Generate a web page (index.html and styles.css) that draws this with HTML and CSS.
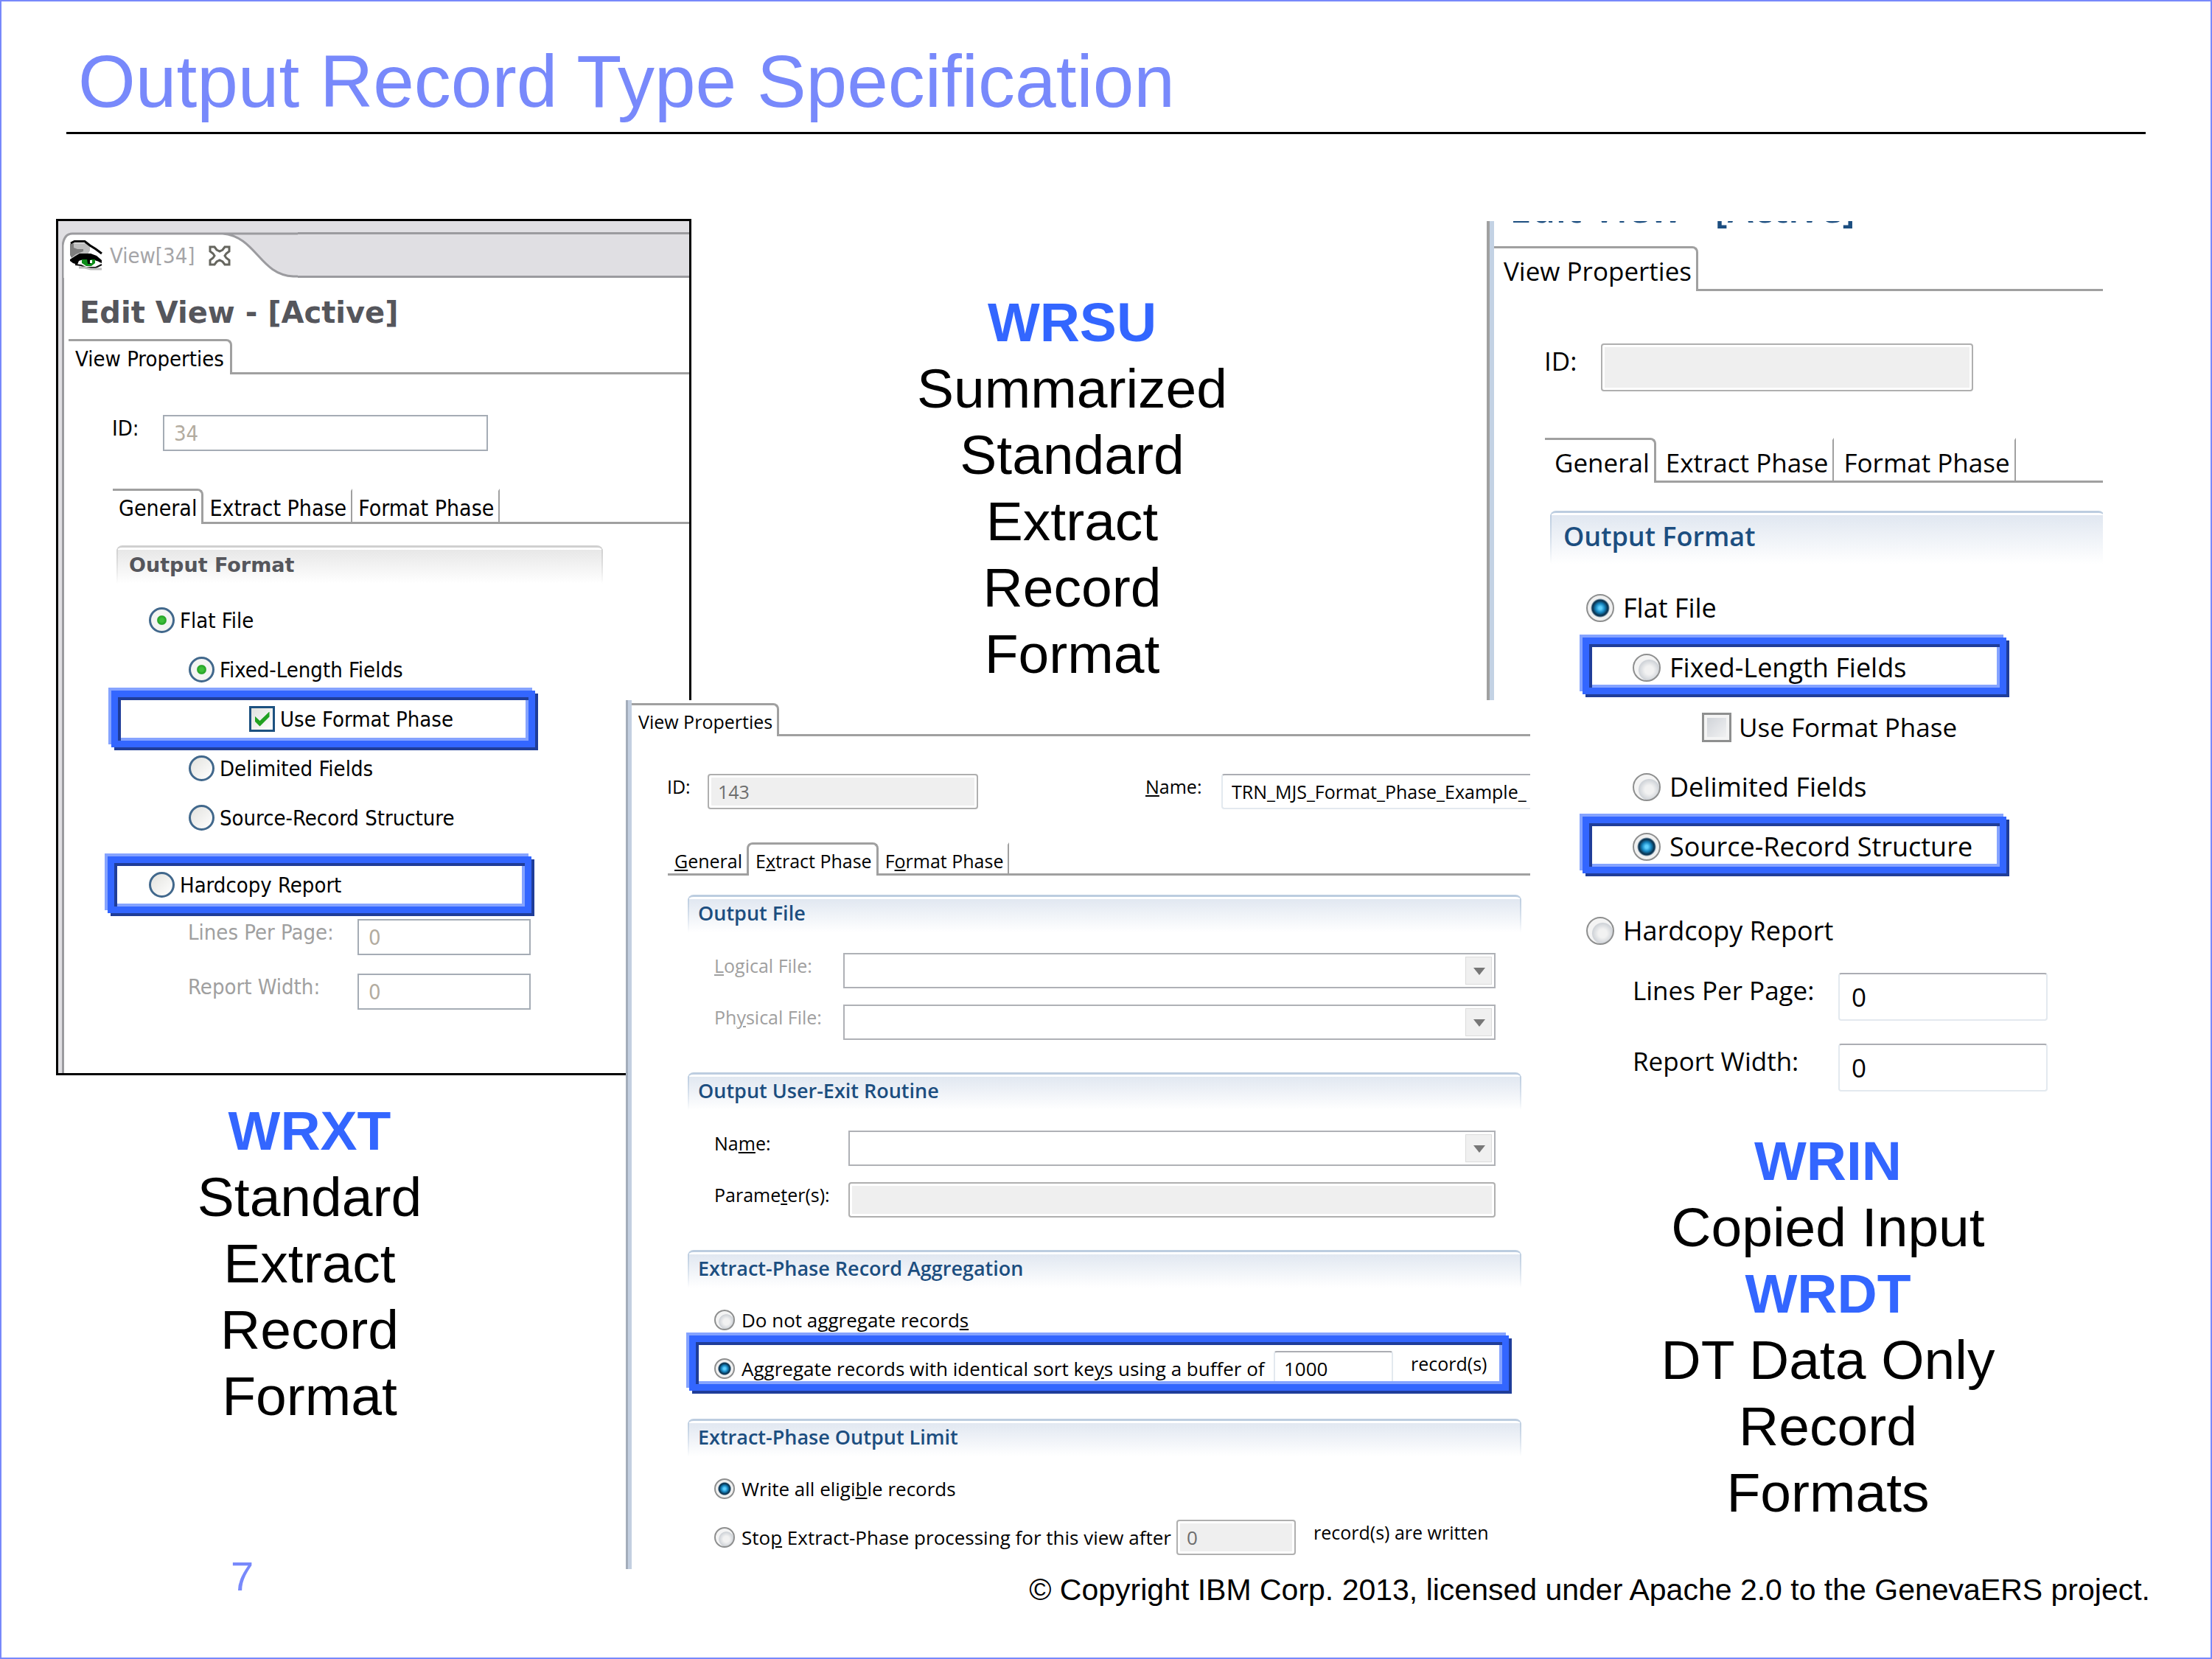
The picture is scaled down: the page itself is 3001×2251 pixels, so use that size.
FILE: index.html
```html
<!DOCTYPE html>
<html lang="en">
<head>
<meta charset="utf-8">
<title>Output Record Type Specification</title>
<link rel="stylesheet" href="styles.css">
</head>
<body>
<main class="slide">
  <header class="slide-header"><h1>Output Record Type Specification</h1></header>

  <div class="slide-body">
    <section class="stack stack--left">
      <div class="window window--xp">
        <div class="frame">
          <div class="editor-bar">
            <div class="editor-tab">
              <svg class="editor-tab-shape" viewBox="0 0 320 62" width="320" height="62" aria-hidden="true">
                <path d="M1 62V18Q3 2 14 2H218C264 6 268 58 314 60H320V62Z" fill="#fff"/>
                <path d="M1 62V18Q3 2 14 2H320M218 2C264 6 268 58 314 60H320" fill="none" stroke="#9b9b9f" stroke-width="3"/>
              </svg>
              <svg class="eye" viewBox="0 0 44 42" width="44" height="42" aria-hidden="true">
                <path d="M0 4H22L27 8V14L24 19H12L2 23Z" fill="#bdbdbd"/>
                <path d="M0 5H5V10L10 12H18V15L8 19L2 24L0 20Z" fill="#7d7d7d"/>
                <path d="M1 4L6 1.500H20L27 7L35 12L43 18" fill="none" stroke="#000" stroke-width="3"/>
                <path d="M0 26L6 22L13 18H28L36 21L43 27V31L38 29L30 26L18 26L12 28L10 33L4 31L0 28Z" fill="#000"/>
                <path d="M12 29L18 26H30L39 29L42 34L34 37H20L12 33Z" fill="#fff"/>
                <path d="M16 26H34V31L29 35H22L16 31Z" fill="#0c8c18"/>
                <path d="M23 25H28V32H24Z" fill="#000"/>
                <path d="M27 27H30V31H27Z" fill="#fff"/>
                <path d="M7 33L15 34L21 37H35L43 33" fill="none" stroke="#0f0f0f" stroke-width="2"/>
                <path d="M12 37H20L28 39H43" fill="none" stroke="#bcbcbc" stroke-width="3"/>
              </svg>
              <span class="editor-name">View[34]</span>
              <button class="close" type="button" aria-label="Close">
                <svg viewBox="0 0 30 28" width="30" height="28" aria-hidden="true"><path d="M2 2H8L11 6L15 8L19 6L22 2H28V8L24 11L22 14L24 17L28 20V26H22L19 22L15 20L11 22L8 26H2V20L6 17L8 14L6 11L2 8Z" fill="#fff" stroke="#66665f" stroke-width="3"/></svg>
              </button>
            </div>
            <div class="editor-rest"></div>
          </div>
          <div class="frame-body">
            <h2 class="view-title">Edit View - [Active]</h2>
            <div class="tabs tabs--page"><button type="button" class="tab is-active">View Properties</button><span class="tab-rest"></span></div>
            <div class="row row--id"><label for="a-id">ID:</label><input id="a-id" type="text" value="34" disabled></div>
            <div class="tabs tabs--sub"><button type="button" class="tab is-active">General</button><button type="button" class="tab">Extract Phase</button><button type="button" class="tab">Format Phase</button><span class="tab-rest"></span></div>
            <h3 class="section">Output Format</h3>
            <div class="options">
              <div class="option"><input id="a-flat" type="radio" name="a-kind" checked><label for="a-flat">Flat File</label></div>
              <div class="option option--sub"><input id="a-fixed" type="radio" name="a-flat" checked><label for="a-fixed">Fixed-Length Fields</label></div>
              <div class="option option--deep mark"><input id="a-use" type="checkbox" checked><label for="a-use">Use Format Phase</label></div>
              <div class="option option--sub"><input id="a-delim" type="radio" name="a-flat"><label for="a-delim">Delimited Fields</label></div>
              <div class="option option--sub"><input id="a-source" type="radio" name="a-flat"><label for="a-source">Source-Record Structure</label></div>
              <div class="option option--last mark mark--outer"><input id="a-hard" type="radio" name="a-kind"><label for="a-hard">Hardcopy Report</label></div>
            </div>
            <div class="fields">
              <div class="row is-disabled"><label for="a-lines">Lines Per Page:</label><input id="a-lines" type="text" value="0" disabled></div>
              <div class="row is-disabled"><label for="a-width">Report Width:</label><input id="a-width" type="text" value="0" disabled></div>
            </div>
          </div>
        </div>
      </div>
      <p class="caption"><strong>WRXT</strong><br>Standard<br>Extract<br>Record<br>Format</p>
    </section>

    <section class="stack stack--middle">
      <p class="caption"><strong>WRSU</strong><br>Summarized<br>Standard<br>Extract<br>Record<br>Format</p>
      <div class="window window--mid">
        <div class="tabs tabs--page"><button type="button" class="tab is-active">View Properties</button><span class="tab-rest"></span></div>
        <div class="row row--id">
          <label for="b-id">ID:</label><input id="b-id" type="text" value="143" disabled>
          <label class="name-label" for="b-name"><u>N</u>ame:</label><input id="b-name" type="text" value="TRN_MJS_Format_Phase_Example_">
        </div>
        <div class="tabs tabs--sub"><button type="button" class="tab before-active"><u>G</u>eneral</button><button type="button" class="tab is-active both">E<u>x</u>tract Phase</button><button type="button" class="tab">F<u>o</u>rmat Phase</button><span class="tab-rest"></span></div>
        <h3 class="section">Output File</h3>
        <div class="fields">
          <div class="row is-disabled"><label for="b-log"><u>L</u>ogical File:</label><div class="combo"><select id="b-log" disabled><option></option></select></div></div>
          <div class="row is-disabled"><label for="b-phy">Ph<u>y</u>sical File:</label><div class="combo"><select id="b-phy" disabled><option></option></select></div></div>
        </div>
        <h3 class="section">Output User-Exit Routine</h3>
        <div class="fields fields--exit">
          <div class="row"><label for="b-exit">Na<u>m</u>e:</label><div class="combo"><select id="b-exit"><option></option></select></div></div>
          <div class="row"><label for="b-par">Parame<u>t</u>er(s):</label><input id="b-par" type="text" disabled></div>
        </div>
        <h3 class="section">Extract-Phase Record Aggregation</h3>
        <div class="options">
          <div class="option"><input id="b-no" type="radio" name="b-agg"><label for="b-no">Do not aggregate record<u>s</u></label></div>
          <div class="option mark"><input id="b-agg" type="radio" name="b-agg" checked><label class="agg-label" for="b-agg">Aggregate records with identical sort ke<u>y</u>s using a buffer of</label><input class="count" type="text" value="1000" aria-label="Buffer size"><span class="unit">record(s)</span></div>
        </div>
        <h3 class="section">Extract-Phase Output Limit</h3>
        <div class="options">
          <div class="option"><input id="b-all" type="radio" name="b-lim" checked><label for="b-all">Write all eligi<u>b</u>le records</label></div>
          <div class="option"><input id="b-stop" type="radio" name="b-lim"><label class="stop-label" for="b-stop">Sto<u>p</u> Extract-Phase processing for this view after</label><input class="count" type="text" value="0" aria-label="Record limit" disabled><span class="unit">record(s) are written</span></div>
        </div>
      </div>
    </section>

    <section class="stack stack--right">
      <div class="window window--wide">
        <h2 class="view-title"><span>Edit View - [Active]</span></h2>
        <div class="tabs tabs--page"><button type="button" class="tab is-active">View Properties</button><span class="tab-rest"></span></div>
        <div class="row row--id"><label for="c-id">ID:</label><input id="c-id" type="text" disabled></div>
        <div class="tabs tabs--sub"><button type="button" class="tab is-active">General</button><button type="button" class="tab">Extract Phase</button><button type="button" class="tab">Format Phase</button><span class="tab-rest"></span></div>
        <h3 class="section">Output Format</h3>
        <div class="options">
          <div class="option"><input id="c-flat" type="radio" name="c-kind" checked><label for="c-flat">Flat File</label></div>
          <div class="option option--sub mark"><input id="c-fixed" type="radio" name="c-flat"><label for="c-fixed">Fixed-Length Fields</label></div>
          <div class="option option--deep"><input id="c-use" type="checkbox"><label for="c-use">Use Format Phase</label></div>
          <div class="option option--sub"><input id="c-delim" type="radio" name="c-flat"><label for="c-delim">Delimited Fields</label></div>
          <div class="option option--sub mark"><input id="c-source" type="radio" name="c-flat" checked><label for="c-source">Source-Record Structure</label></div>
          <div class="option option--last"><input id="c-hard" type="radio" name="c-kind"><label for="c-hard">Hardcopy Report</label></div>
        </div>
        <div class="fields">
          <div class="row"><label for="c-lines">Lines Per Page:</label><input id="c-lines" type="text" value="0"></div>
          <div class="row"><label for="c-width">Report Width:</label><input id="c-width" type="text" value="0"></div>
        </div>
      </div>
      <p class="caption"><strong>WRIN</strong><br>Copied Input<br><strong>WRDT</strong><br>DT Data Only<br>Record<br>Formats</p>
    </section>
  </div>

  <footer class="slide-footer"><span class="page">7</span><span class="copyright">© Copyright IBM Corp. 2013, licensed under Apache 2.0 to the GenevaERS project.</span></footer>
</main>
</body>
</html>
```
FILE: styles.css
```css
*, *::before, *::after { box-sizing: border-box; }
body { margin: 0; background: #fff; }
h1, h2, h3, p { margin: 0; font-weight: normal; }
button, input, select { font: inherit; color: inherit; margin: 0; }
button { background: none; border: 0; padding: 0; }

/* Slide */
.slide {
  min-height: 100vh;
  border: 2px solid #7889fb;
  display: flex;
  flex-direction: column;
  font-family: "Liberation Sans", Arial, sans-serif;
  color: #000;
}
.slide-header {
  margin: 48px 88px 0;
  padding: 0 16px 9px;
  border-bottom: 3px solid #000;
}
.slide-header h1 { font-size: 100px; line-height: 120px; color: #7889fb; }
.slide-body {
  display: grid;
  grid-template-columns: 773fr 89fr 1079fr 59fr 777fr;
  padding: 0 146px 0 74px;
  margin-top: 115px;
}
.stack { display: flex; flex-direction: column; grid-row: 1; min-width: 0; }
.stack--left { grid-column: 1 / 3; }
.stack--middle { grid-column: 2 / 5; z-index: 1; pointer-events: none; }
.stack--right { grid-column: 4 / 6; padding-top: 3px; }
.caption { font-size: 75px; line-height: 90px; text-align: center; }
.caption strong { color: #36f; }
.stack--left .caption { margin: 30px 174px 0 0; }
.stack--middle .caption { margin: 95px 16px 18px 0; }
.stack--right .caption { margin: 40px 0 0 90px; }
.slide-footer {
  display: flex;
  justify-content: space-between;
  align-items: flex-end;
  margin-top: -12px;
  padding: 0 82px 0 311px;
}
.page { font-size: 56px; line-height: 44px; padding-bottom: 20px; color: #7889fb; }
.copyright { font-size: 41px; line-height: 48px; }

/* Windows: shared parts */
.window {
  --line: #a0a0a0;
  background: #fff;
  font-size: var(--size);
  line-height: var(--lead);
  pointer-events: auto;
  overflow: hidden;
}
.tabs { display: flex; }
.tab {
  flex: none;
  padding: var(--tab-top) var(--tab-right) 0 var(--tab-left);
  border: solid var(--line);
  border-width: 0 2px 3px 0;
  border-top: 3px solid transparent;
  white-space: nowrap;
  line-height: var(--lead);
}
.tab.is-active {
  border-width: 3px 3px 0 0;
  border-color: var(--line);
  border-top-right-radius: 8px;
  padding-bottom: 3px;
}
.tab.both { border-left-width: 3px; border-top-left-radius: 8px; }
.tab.before-active { border-right-width: 0; }
.tab-rest { flex: 1; border-bottom: 3px solid var(--line); }
.section {
  padding: var(--sec-top) 0 var(--sec-bottom) var(--sec-left);
  border-top: 3px solid var(--sec-line);
  border-radius: 8px 8px 0 0;
  background:
    linear-gradient(var(--sec-line), transparent) left / 2px 100% no-repeat,
    linear-gradient(var(--sec-line), transparent) right / 2px 100% no-repeat,
    linear-gradient(#fff, #fff) top / 100% 3px no-repeat,
    linear-gradient(var(--sec-fill), #fff);
  color: var(--sec-ink);
}
.row { display: flex; align-items: flex-start; }
.row label { flex: none; white-space: nowrap; }
input[type="text"] {
  height: var(--box);
  min-width: 0;
  padding: 0 var(--box-pad);
  border: 2px solid #e3e9ef;
  border-top-color: #abadb3;
  border-radius: 4px;
  background: #fff;
}
input[type="text"]:disabled {
  border: 2px solid #afafaf;
  background: #efefef;
  box-shadow: inset 0 0 0 3px #fff;
  color: #6d6d6d;
}
.is-disabled label { color: #a0a0a0; }
.options { font-size: var(--option-size); }
.option { position: relative; display: flex; align-items: center; height: var(--pitch); padding-left: var(--indent); }
.option > label { flex: none; white-space: nowrap; padding-left: var(--gap); }
input[type="radio"], input[type="checkbox"] { appearance: none; flex: none; width: var(--dot); height: var(--dot); }
input[type="radio"] {
  border-radius: 50%;
  border: 2px solid #8e8f8f;
  background: radial-gradient(circle at 60% 60%, #f2f2f2 0 20%, #cfd3d8 48%, #f4f4f4 52% 100%);
}
input[type="radio"]:checked {
  background: radial-gradient(circle, #5fd0ff 0 8%, #1583bd 26%, #0b3350 42%, #14405f 46%, #f0f0f0 54% 100%);
}

/* Annotation frame drawn over a row */
.mark::after {
  content: "";
  position: absolute;
  top: var(--mark-top);
  left: var(--mark-left);
  width: 575px;
  height: 77px;
  border: 9px solid #36f;
  box-shadow: -4px -4px 0 #85a3ff, 4px 4px 0 #1f3d99, inset 4px 4px 0 #1f3d99, inset -4px -4px 0 #85a3ff;
  pointer-events: none;
}

/* Left window */
.window--xp {
  --size: 29px; --lead: 36px; --option-size: 29px;
  --tab-top: 6px; --tab-left: 9px; --tab-right: 8px;
  --sec-top: 6px; --sec-bottom: 7px; --sec-left: 17px;
  --sec-line: #d0d0d0; --sec-fill: #e6e6e6; --sec-ink: #55565c;
  --box: 49px; --box-pad: 13px;
  --pitch: 67px; --indent: 115px; --dot: 35px; --gap: 7px;
  --mark-top: -5px; --mark-left: 64px;
  border: 3px solid #000;
  font-family: "DejaVu Sans Condensed", "DejaVu Sans", sans-serif;
}
.frame { padding-left: 5px; background: #e0dfe3; }
.editor-bar { display: flex; height: 77px; padding-top: 15px; }
.editor-tab { position: relative; display: flex; align-items: center; width: 320px; padding: 2px 0 0 11px; }
.editor-tab-shape { position: absolute; left: 0; top: 0; }
.eye, .editor-name, .close { position: relative; }
.editor-name { padding-left: 10px; width: 144px; font-size: 29px; color: #a5a5a8; }
.close { line-height: 0; }
.editor-rest { flex: 1; border-top: 3px solid #9b9b9f; border-bottom: 3px solid #9b9b9f; }
.frame-body { border-left: 3px solid #9b9b9f; background: #fff; padding: 23px 0 86px; }
.window--xp .view-title { padding-left: 21px; font: bold 40px/48px "DejaVu Sans", sans-serif; color: #55565c; }
.window--xp .tabs--page { margin: 12px 0 0 6px; }
.window--xp .row--id { margin: 55px 0 0 65px; }
.window--xp .row--id label { width: 69px; }
.window--xp .row--id input { width: 441px; }
.window--xp .tabs--sub { --tab-left: 8px; --tab-right: 6px; margin: 51px 0 0 66px; font-size: 30px; }
.window--xp .section { width: 660px; margin: 29px 0 16px 71px; font: bold 27px/36px "DejaVu Sans", sans-serif; }
.window--xp .option--sub { --indent: 169px; }
.window--xp .option--deep { --indent: 251px; }
.window--xp .option--last { margin-top: 24px; }
.window--xp .mark--outer { --mark-left: 59px; }
.window--xp .fields { display: grid; gap: 25px; margin: 13px 0 0 168px; }
.window--xp .fields label { width: 230px; }
.window--xp .fields input { width: 235px; }
.window--xp input[type="text"]:disabled { border: 2px solid #a5acb5; border-radius: 0; background: #fff; color: #b3aca0; }
.window--xp input[type="radio"] { border: 3px solid #41688c; background: linear-gradient(135deg, #e2e2de, #fff); }
.window--xp input[type="radio"]:checked { background: radial-gradient(circle, #3fbf3a 0 12%, #21a121 28%, #f4f4f2 34% 100%); }
.window--xp input[type="checkbox"] {
  border: 3px solid #1c5180;
  background: linear-gradient(135deg, #e2e2de, #fff);
  display: grid;
  place-items: center;
}
.window--xp input[type="checkbox"]:checked::before {
  content: "";
  width: 20px;
  height: 20px;
  background: #21a121;
  clip-path: polygon(0 30%, 0 65%, 35% 100%, 100% 35%, 100% 0, 35% 62%);
}

/* Middle window */
.window--mid {
  --size: 25px; --lead: 34px; --option-size: 26px;
  --tab-top: 5px; --tab-left: 9px; --tab-right: 6px;
  --sec-top: 5px; --sec-bottom: 9px; --sec-left: 14px;
  --sec-line: #bccde0; --sec-fill: #dfe6f0; --sec-ink: #1c4e80;
  --box: 48px; --box-pad: 12px;
  --pitch: 66px; --indent: 117px; --dot: 28px; --gap: 9px;
  --mark-top: -12px; --mark-left: 83px;
  padding: 4px 0 10px;
  border-left: 3px solid #a3adbb;
  box-shadow: inset 5px 0 0 #c3cfe0;
  font-family: "Open Sans", "Noto Sans", sans-serif;
}
.window--mid .tabs--page { margin-left: 5px; }
.window--mid .row--id { margin: 51px 0 0 53px; }
.window--mid .row--id label { width: 55px; }
.window--mid .row--id input { width: 367px; }
.window--mid .row--id .name-label { width: 103px; margin-left: 227px; }
.window--mid .row--id input:last-child { flex: 1; border-right: 0; border-radius: 4px 0 0 4px; padding-right: 0; }
.window--mid .tabs--sub { margin: 45px 0 0 54px; }
.window--mid .section { margin: 26px 12px 0 81px; font-size: 27px; font-weight: 600; }
.window--mid .fields { display: grid; gap: 22px; margin: 28px 47px 44px 117px; }
.window--mid .fields label { width: 175px; }
.window--mid .fields--exit label { width: 182px; }
.window--mid .fields input, .combo { flex: 1; }
.window--mid .fields + .section { margin-top: 0; }
.window--mid .options { margin: 11px 0 35px; }
.window--mid .options + .section { margin-top: 0; }
.window--mid .options:last-child { margin-bottom: 0; }
.window--mid .mark::after { width: auto; right: 29px; height: 75px; }
.window--mid .agg-label { width: 731px; }
.window--mid .stop-label { width: 599px; }
.count { width: 162px; }
.unit { padding: 0 0 14px 24px; font-size: 25px; white-space: nowrap; }
.combo { position: relative; height: var(--box); }
.combo select { appearance: none; display: block; width: 100%; height: 100%; border: 2px solid #afb1b6; border-radius: 0; background: #fff; opacity: 1; }
.combo::before {
  content: "";
  position: absolute;
  top: 5px;
  right: 5px;
  bottom: 5px;
  width: 36px;
  border: 1px solid #dcdcdc;
  background: #f0f0f0;
  pointer-events: none;
}
.combo::after {
  content: "";
  position: absolute;
  top: 20px;
  right: 14px;
  border: solid transparent;
  border-width: 10px 8px 0;
  border-top-color: #777;
  pointer-events: none;
}

/* Right window */
.window--wide {
  --size: 35px; --lead: 48px; --option-size: 36px;
  --tab-top: 7px; --tab-left: 13px; --tab-right: 6px;
  --sec-top: 8px; --sec-bottom: 13px; --sec-left: 18px;
  --sec-line: #bccde0; --sec-fill: #dfe6f0; --sec-ink: #1c4e80;
  --box: 65px; --box-pad: 16px;
  --pitch: 81px; --indent: 131px; --dot: 38px; --gap: 12px;
  --mark-top: 0px; --mark-left: 126px;
  padding-bottom: 9px;
  border-left: 4px solid #a0a0a0;
  box-shadow: inset 6px 0 0 #c3d2e4;
  font-family: "Open Sans", "Noto Sans", sans-serif;
}
.window--wide .view-title { height: 34px; overflow: hidden; padding-left: 27px; font-size: 53px; line-height: 72px; font-weight: 600; color: #1c4e80; }
.window--wide .view-title span { display: block; margin-top: -54px; }
.window--wide .tabs--page { margin-left: 6px; }
.window--wide .row--id { margin: 71px 0 0 74px; }
.window--wide .row--id label { width: 77px; }
.window--wide .row--id input { width: 505px; }
.window--wide .tabs--sub { margin: 63px 0 0 75px; }
.window--wide .section { margin: 38px -2px 19px 82px; font-size: 36px; font-weight: 600; }
.window--wide .option--sub { --indent: 194px; }
.window--wide .option--deep { --indent: 288px; --dot: 40px; --gap: 10px; font-size: 35px; }
.window--wide .option--last { margin-top: 33px; }
.window--wide .fields { display: grid; gap: 31px; margin: 17px 0 0 194px; }
.window--wide .fields label { width: 279px; }
.window--wide .fields input { width: 284px; }
.window--wide input[type="checkbox"] {
  border: 3px solid #8e8f8f;
  background: linear-gradient(135deg, #cbcfd5, #f6f6f6);
  box-shadow: inset 0 0 0 4px #f4f4f4;
}
```
